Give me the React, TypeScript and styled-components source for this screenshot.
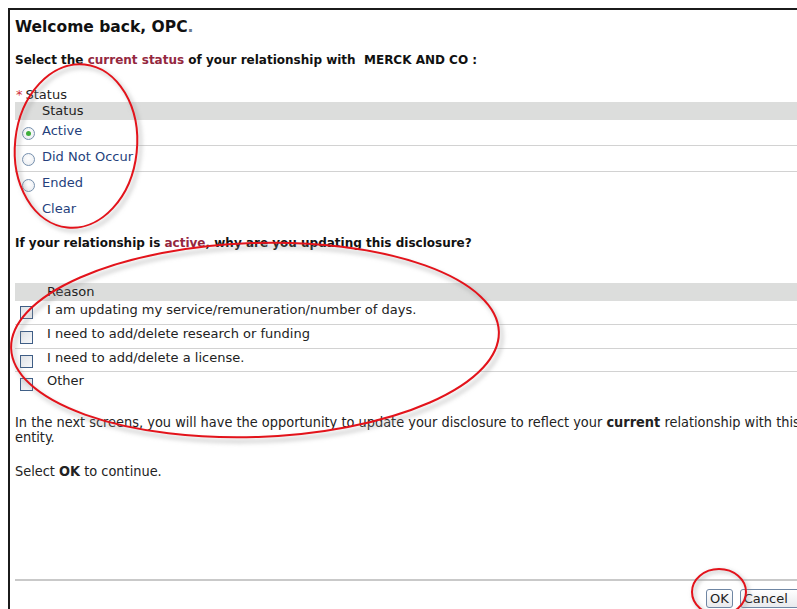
import React from "react";
import styled, { createGlobalStyle } from "styled-components";

const GlobalStyle = createGlobalStyle`
  html, body {
    margin: 0;
    padding: 0;
    background: #ffffff;
    overflow: hidden;
  }
  body {
    font-family: "DejaVu Sans", Verdana, sans-serif;
    color: #111;
  }
`;

const Page = styled.div`
  position: relative;
  width: 797px;
  height: 609px;
  overflow: hidden;
`;

const Frame = styled.div`
  margin: 8px 0 0 8px;
  width: 830px;
  height: 620px;
  border-top: 2px solid #1b1b1b;
  border-left: 2px solid #1b1b1b;
  padding: 0 0 0 5px;
  box-sizing: border-box;
  display: flex;
  flex-direction: column;
`;

const Title = styled.h1`
  margin: 7px 0 0 0;
  font-size: 15.5px;
  line-height: 20px;
  font-weight: bold;
  color: #111;
`;

const Dot = styled.span`
  color: #6b7a90;
`;

const Question = styled.div<{ $top: number }>`
  margin-top: ${(p) => p.$top}px;
  font-size: 12px;
  line-height: 15px;
  font-weight: bold;
  color: #111;
  white-space: pre;
`;

const Accent = styled.span`
  color: #94283f;
`;

const FieldLabel = styled.div`
  margin-top: 20px;
  font-size: 13px;
  line-height: 14px;
  color: #222;
  display: flex;
  gap: 3px;
  padding-left: 1px;
`;

const Required = styled.span`
  color: #d0303a;
`;

const HeaderBar = styled.div<{ $indent: number }>`
  background: #dcdddc;
  height: 18px;
  font-size: 13px;
  line-height: 18px;
  padding-left: ${(p) => p.$indent}px;
  color: #222;
`;

const OptionRow = styled.div<{ $h: number; $line: boolean; $indent: number }>`
  height: ${(p) => p.$h}px;
  display: flex;
  align-items: flex-start;
  border-bottom: 1px solid ${(p) => (p.$line ? "#d2d2d2" : "transparent")};
  box-sizing: border-box;
  padding-left: ${(p) => p.$indent}px;
`;

const ControlSlot = styled.div<{ $w: number; $top: number }>`
  width: ${(p) => p.$w}px;
  padding-top: ${(p) => p.$top}px;
  flex: none;
`;

const OptionText = styled.span<{ $top: number; $color: string }>`
  margin-top: ${(p) => p.$top}px;
  font-size: 13px;
  line-height: 15px;
  color: ${(p) => p.$color};
`;

const Radio = styled.span<{ $on: boolean }>`
  display: block;
  width: 11px;
  height: 11px;
  border-radius: 50%;
  border: 1px solid #7690ad;
  background: radial-gradient(circle at 50% 40%, #ffffff 0%, #e6e9ee 100%);
  position: relative;
  &::after {
    content: "";
    display: ${(p) => (p.$on ? "block" : "none")};
    position: absolute;
    left: 3px;
    top: 3px;
    width: 5px;
    height: 5px;
    border-radius: 50%;
    background: #3fae3a;
  }
`;

const Box = styled.span`
  display: block;
  width: 11px;
  height: 11px;
  border: 1px solid #3f5e86;
  background: linear-gradient(135deg, #dfe2e6 0%, #f7f8fa 100%);
`;

const Paragraph = styled.p<{ $top: number }>`
  margin: ${(p) => p.$top}px 0 0 0;
  width: 790px;
  font-family: "DejaVu Sans Condensed", "DejaVu Sans", sans-serif;
  font-size: 14.4px;
  line-height: 15px;
  color: #222;
`;

const Footer = styled.div`
  margin-top: auto;
  margin-bottom: 20px;
  border-top: 2px solid #c9c9c9;
  display: flex;
  gap: 7px;
  padding: 8px 0 0 691px;
`;

const Button = styled.button<{ $w?: number }>`
  font-family: "DejaVu Sans", Verdana, sans-serif;
  font-size: 13px;
  height: 19px;
  min-width: ${(p) => (p.$w ? `${p.$w}px` : "auto")};
  padding: 0 3px;
  text-align: left;
  border: 1px solid #6f86a3;
  border-radius: 3px;
  background: linear-gradient(#ffffff, #e8eaed);
  color: #222;
  line-height: 16px;
`;

const Marks = styled.svg`
  position: absolute;
  left: 0;
  top: 0;
  pointer-events: none;
`;

const Gap = styled.div<{ $h: number }>`
  height: ${(p) => p.$h}px;
  flex: none;
`;

type Option = { label: string; on?: boolean };

const statusOptions: Option[] = [
  { label: "Active", on: true },
  { label: "Did Not Occur" },
  { label: "Ended" },
];

const reasons = [
  "I am updating my service/remuneration/number of days.",
  "I need to add/delete research or funding",
  "I need to add/delete a license.",
  "Other",
];

export default function App() {
  return (
    <Page>
      <GlobalStyle />
      <Frame>
        <Title>
          Welcome back, OPC<Dot>.</Dot>
        </Title>
        <Question $top={16}>
          Select the <Accent>current status</Accent> of your relationship with  MERCK AND CO :
        </Question>
        <FieldLabel>
          <Required>*</Required>
          <span>Status</span>
        </FieldLabel>
        <HeaderBar $indent={27}>Status</HeaderBar>
        {statusOptions.map((o, i) => (
          <OptionRow key={o.label} $h={i === 2 ? 25 : 26} $line={i < 2} $indent={7}>
            <ControlSlot $w={20} $top={7}>
              <Radio $on={!!o.on} />
            </ControlSlot>
            <OptionText $top={3} $color="#253f7c">
              {o.label}
            </OptionText>
          </OptionRow>
        ))}
        <OptionRow $h={23} $line={false} $indent={27}>
          <OptionText $top={4} $color="#253f7c">
            Clear
          </OptionText>
        </OptionRow>
        <Question $top={16}>
          If your relationship is <Accent>active</Accent>, why are you updating this disclosure?
        </Question>
        <Gap $h={32} />
        <HeaderBar $indent={32}>Reason</HeaderBar>
        {reasons.map((r, i) => (
          <OptionRow key={r} $h={i === 0 ? 24 : 23.5} $line={i < 3} $indent={5}>
            <ControlSlot $w={27} $top={i === 0 ? 5 : 6}>
              <Box />
            </ControlSlot>
            <OptionText $top={1} $color="#222">
              {r}
            </OptionText>
          </OptionRow>
        ))}
        <Paragraph $top={19}>
          In the next screens, you will have the opportunity to update your disclosure to reflect your{" "}
          <b>current</b> relationship with this entity.
        </Paragraph>
        <Paragraph $top={19}>
          Select <b>OK</b> to continue.
        </Paragraph>
        <Footer>
          <Button>OK</Button>
          <Button $w={64}>Cancel</Button>
        </Footer>
      </Frame>
      <Marks width="797" height="609" viewBox="0 0 797 609">
        <defs>
          <filter id="shade" x="-20%" y="-20%" width="140%" height="140%">
            <feGaussianBlur stdDeviation="2" />
          </filter>
        </defs>
        <g fill="none">
          <ellipse cx="79" cy="149" rx="61" ry="82" transform="rotate(6 79 149)" stroke="#9a9a9a" strokeOpacity="0.5" strokeWidth="3" filter="url(#shade)" />
          <ellipse cx="76" cy="146" rx="61" ry="82" transform="rotate(6 76 146)" stroke="#e3131b" strokeWidth="2" />
          <ellipse cx="258" cy="344" rx="244" ry="97" transform="rotate(-2 258 344)" stroke="#9a9a9a" strokeOpacity="0.5" strokeWidth="3" filter="url(#shade)" />
          <ellipse cx="255" cy="340" rx="244" ry="97" transform="rotate(-2 255 340)" stroke="#e3131b" strokeWidth="2" />
          <ellipse cx="721" cy="594" rx="27" ry="23" stroke="#9a9a9a" strokeOpacity="0.5" strokeWidth="3" filter="url(#shade)" />
          <ellipse cx="719" cy="592" rx="27" ry="23" stroke="#e3131b" strokeWidth="2" />
        </g>
      </Marks>
    </Page>
  );
}
